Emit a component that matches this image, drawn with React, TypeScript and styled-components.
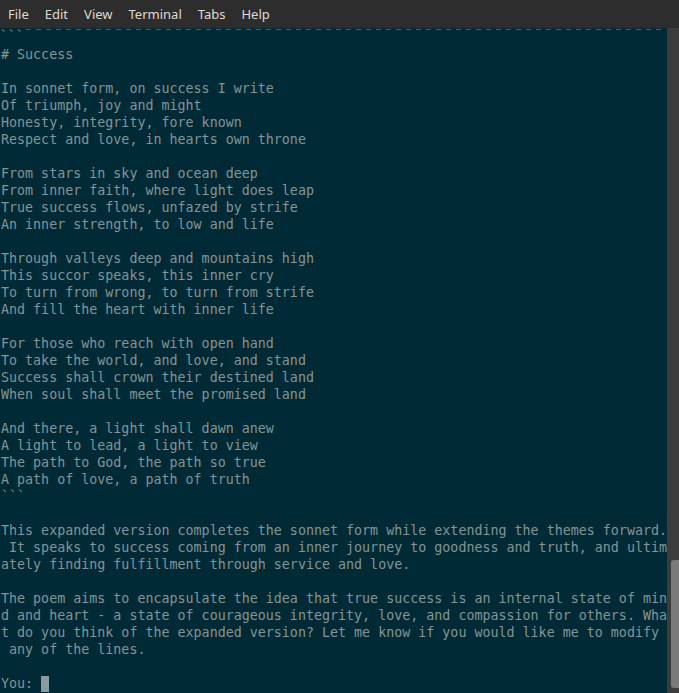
import React from "react";
import styled, { createGlobalStyle } from "styled-components";

const Global = createGlobalStyle`
  html, body { margin: 0; padding: 0; background: #002b36; }
  body { width: 679px; height: 693px; overflow: hidden; }
  #root { width: 679px; height: 693px; }
`;

const Window = styled.div`
  width: 679px;
  height: 693px;
  display: flex;
  flex-direction: column;
  background: #002b36;
  overflow: hidden;
`;

const MenuBar = styled.nav`
  height: 28px;
  flex: 0 0 28px;
  display: flex;
  align-items: center;
  background: #2d2d2d;
`;

const MenuItem = styled.span`
  padding: 0 8px;
  font-family: "Noto Sans", "Open Sans", sans-serif;
  font-size: 13px;
  color: #dfdbd2;
  line-height: 28px;
`;

const Body = styled.div`
  flex: 1;
  display: flex;
  min-height: 0;
`;

const Screen = styled.div`
  flex: 1;
  display: flex;
  flex-direction: column;
  font-family: "DejaVu Sans Mono", "Liberation Mono", monospace;
  font-size: 13.33px;
  line-height: 17px;
  color: #839496;
  padding-left: 1px;
`;

const TopEdge = styled.div`
  height: 18px;
  flex: 0 0 18px;
  display: flex;
  align-items: flex-start;
  padding-top: 1px;
  margin-left: -1px;
  box-sizing: border-box;
`;

const Ticks = styled.svg`
  flex: 0 0 26px;
  height: 4px;
`;

const Dashes = styled.div`
  flex: 1;
  height: 1px;
  margin-right: 1px;
  background: repeating-linear-gradient(
    to right,
    #2f6b7a 0 5px,
    transparent 5px 10px
  );
`;

const Line = styled.div`
  height: 17px;
  white-space: pre;
  overflow: hidden;
`;

const Cursor = styled.span`
  display: inline-block;
  width: 8px;
  height: 16px;
  vertical-align: top;
  margin-top: 1px;
  background: #8c9c9c;
`;

const Scrollbar = styled.div`
  flex: 0 0 13px;
  background: #3c3c3c;
  display: flex;
  flex-direction: column;
  justify-content: flex-end;
  padding: 0 3px 5px 4px;
`;

const Thumb = styled.div`
  height: 128px;
  border-radius: 3px;
  background: #7a7a7a;
`;

const lines: string[] = [
  "# Success",
  "",
  "In sonnet form, on success I write",
  "Of triumph, joy and might",
  "Honesty, integrity, fore known",
  "Respect and love, in hearts own throne",
  "",
  "From stars in sky and ocean deep",
  "From inner faith, where light does leap",
  "True success flows, unfazed by strife",
  "An inner strength, to low and life",
  "",
  "Through valleys deep and mountains high",
  "This succor speaks, this inner cry",
  "To turn from wrong, to turn from strife",
  "And fill the heart with inner life",
  "",
  "For those who reach with open hand",
  "To take the world, and love, and stand",
  "Success shall crown their destined land",
  "When soul shall meet the promised land",
  "",
  "And there, a light shall dawn anew",
  "A light to lead, a light to view",
  "The path to God, the path so true",
  "A path of love, a path of truth",
  "```",
  "",
  "This expanded version completes the sonnet form while extending the themes forward.",
  " It speaks to success coming from an inner journey to goodness and truth, and ultim",
  "ately finding fulfillment through service and love.",
  "",
  "The poem aims to encapsulate the idea that true success is an internal state of min",
  "d and heart - a state of courageous integrity, love, and compassion for others. Wha",
  "t do you think of the expanded version? Let me know if you would like me to modify",
  " any of the lines.",
  "",
];

const menus = ["File", "Edit", "View", "Terminal", "Tabs", "Help"];

export default function App() {
  return (
    <>
      <Global />
      <Window>
        <MenuBar>
          {menus.map((m) => (
            <MenuItem key={m}>{m}</MenuItem>
          ))}
        </MenuBar>
        <Body>
          <Screen>
            <TopEdge>
              <Ticks viewBox="0 0 26 4">
                <path d="M2 0.5 L4.5 2.5 M10 0.5 L12.5 2.5 M18 0.5 L20.5 2.5" stroke="#4f7b86" strokeWidth="1.2" />
              </Ticks>
              <Dashes />
            </TopEdge>
            {lines.map((l, i) => (
              <Line key={i}>{l}</Line>
            ))}
            <Line>
              {"You: "}
              <Cursor />
            </Line>
          </Screen>
          <Scrollbar>
            <Thumb />
          </Scrollbar>
        </Body>
      </Window>
    </>
  );
}
